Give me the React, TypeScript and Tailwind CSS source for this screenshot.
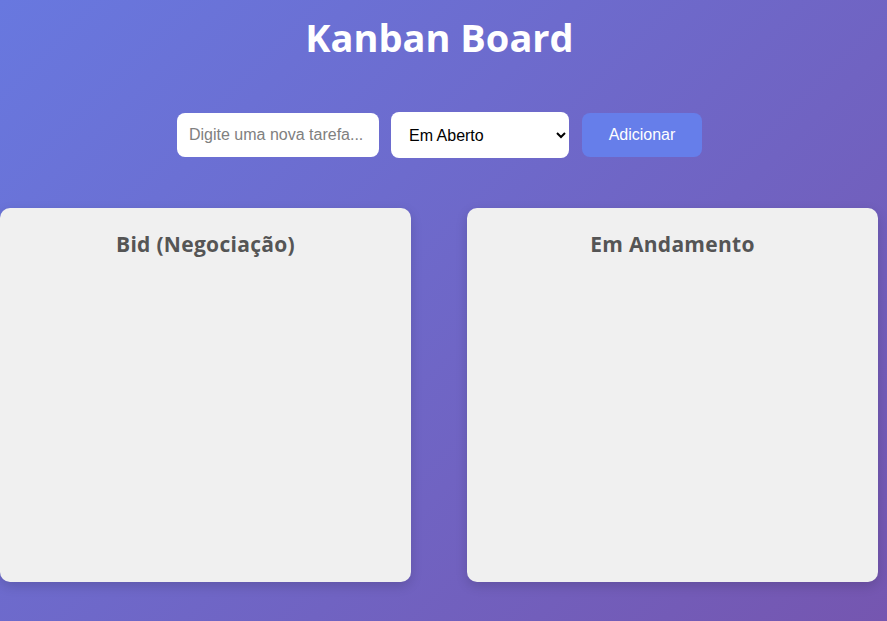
import { useState } from "react";

const columns = ["Bid (Negociação)", "Em Andamento"];

const App = () => {
  const [task, setTask] = useState("");
  const [status, setStatus] = useState("Em Aberto");

  return (
    <div className="h-[621px] w-[887px] overflow-hidden bg-[linear-gradient(135deg,#6878df_0%,#7556b0_100%)] font-['Open_Sans',sans-serif]">
      <div className="w-[879px]">
        <h1 className="pt-[14px] text-center text-[38px] font-bold leading-[46px] text-white">Kanban Board</h1>

        <div className="mt-[52px] flex items-center justify-center gap-3">
          <input
            value={task}
            onChange={(e) => setTask(e.target.value)}
            placeholder="Digite uma nova tarefa..."
            className="h-[44px] w-[202px] rounded-lg bg-white px-3 font-['Liberation_Sans',sans-serif] text-[16px] text-black outline-none placeholder:text-[#808080]"
          />
          <select
            value={status}
            onChange={(e) => setStatus(e.target.value)}
            className="h-[46px] w-[178px] rounded-lg bg-white pl-[14px] pr-2 font-['Liberation_Sans',sans-serif] text-[16px] text-black outline-none"
          >
            <option>Em Aberto</option>
            <option>Bid (Negociação)</option>
            <option>Em Andamento</option>
            <option>Concluído</option>
          </select>
          <button className="ml-[1px] h-[44px] w-[120px] rounded-lg bg-[#667eea] font-['Liberation_Sans',sans-serif] text-[16px] text-white">
            Adicionar
          </button>
        </div>

        <div className="mt-[50px] flex gap-[56px]">
          {columns.map((c) => (
            <div
              key={c}
              className="h-[374px] w-[411px] shrink-0 rounded-[10px] bg-[#f0f0f0] pt-[22px] shadow-[0_4px_12px_rgba(0,0,0,0.15)]"
            >
              <h2 className="text-center text-[21px] font-bold leading-[28px] tracking-[0.3px] text-[#555]">{c}</h2>
            </div>
          ))}
        </div>
      </div>
    </div>
  );
};

export default App;
